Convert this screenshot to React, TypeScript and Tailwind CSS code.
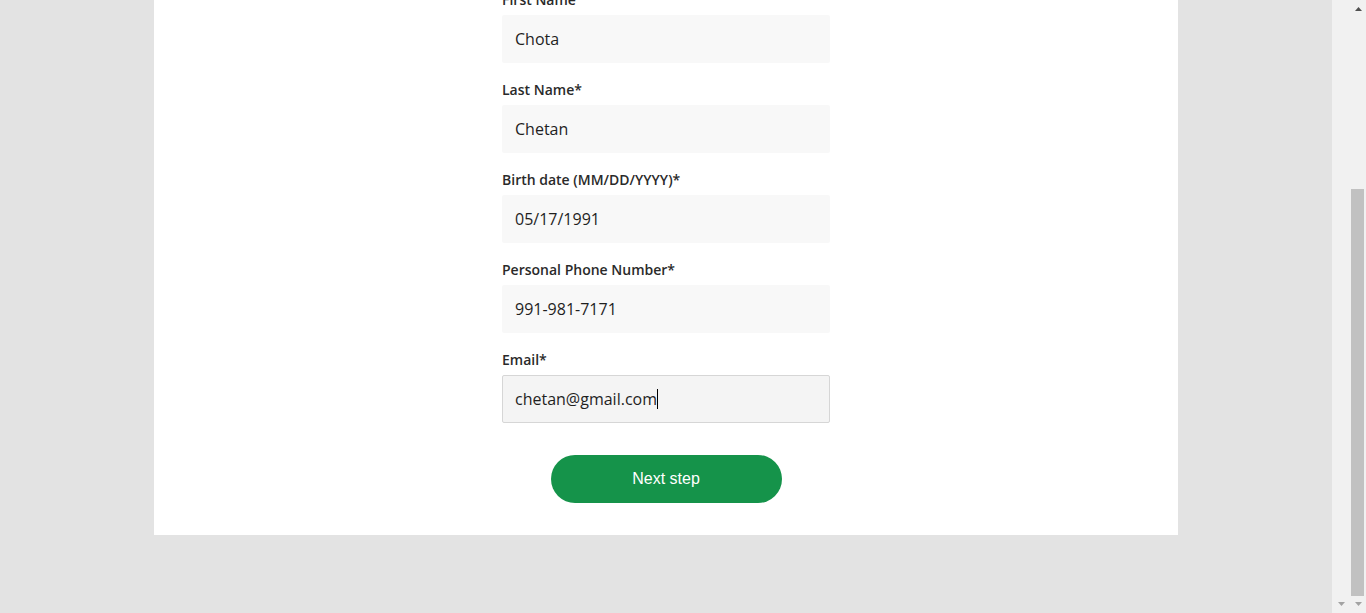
import React from 'react';

const fields = [
    { label: 'First Name', value: 'Chota' },
    { label: 'Last Name*', value: 'Chetan' },
    { label: 'Birth date (MM/DD/YYYY)*', value: '05/17/1991' },
    { label: 'Personal Phone Number*', value: '991-981-7171' },
];

const Arrow: React.FC<{ dir: 'up' | 'down'; color: string }> = ({ dir, color }) => (
    <svg width="7" height="4" viewBox="0 0 7 4">
        {dir === 'up'
            ? <polygon points="3.5,0 7,4 0,4" fill={color} />
            : <polygon points="0,0 7,0 3.5,4" fill={color} />}
    </svg>
);

const Field: React.FC<{ label: string; value: string; focused?: boolean }> = ({ label, value, focused }) => (
    <div className="flex flex-col">
        <label className="text-[14px] leading-[22px] font-semibold text-[#2a2a2a] mb-[4px]">{label}</label>
        <div
            className={`h-12 w-[328px] flex items-center text-[16px] text-[#1f1f1f] rounded-[2px] ${focused ? 'bg-[#f4f4f4] border border-[#d6d6d6] px-[12px]' : 'bg-[#f8f8f8] px-[13px]'}`}
        >
            <span>{value}</span>
            {focused && <span className="w-px h-5 bg-black" />}
        </div>
    </div>
);

export default function App() {
    return (
        <div className="h-[613px] w-full flex overflow-hidden bg-[#e3e3e3]" style={{ fontFamily: '"Open Sans", "Noto Sans", sans-serif' }}>
            <div className="flex-1 flex justify-center items-start">
                <div className="w-[1024px] bg-white flex flex-col items-center -mt-[11px] pb-8">
                    <div className="flex flex-col gap-4">
                        {fields.map((f) => (
                            <Field key={f.label} label={f.label} value={f.value} />
                        ))}
                        <Field label="Email*" value="chetan@gmail.com" focused />
                    </div>
                    <button
                        className="mt-8 h-12 w-[231px] rounded-full bg-[#15934a] text-white text-[16px]"
                        style={{ fontFamily: '"Liberation Sans", Arial, sans-serif' }}
                    >
                        Next step
                    </button>
                </div>
            </div>
            <div className="w-[34px] h-full bg-[#f1f1f1] flex">
                <div className="w-[17px] h-full flex flex-col justify-end items-center pb-[7px] pl-[1px]">
                    <Arrow dir="down" color="#a3a3a3" />
                </div>
                <div className="w-[17px] h-full flex flex-col">
                    <div className="h-[17px] flex items-start justify-center pt-[7px] pl-[1px]">
                        <Arrow dir="up" color="#505050" />
                    </div>
                    <div className="flex-1 flex flex-col justify-end pl-[2px] pr-[2px]">
                        <div className="h-[407px] bg-[#c1c1c1]" />
                    </div>
                    <div className="h-[17px] flex items-start justify-center pt-[6px] pl-[1px]">
                        <Arrow dir="down" color="#a3a3a3" />
                    </div>
                </div>
            </div>
        </div>
    );
}
